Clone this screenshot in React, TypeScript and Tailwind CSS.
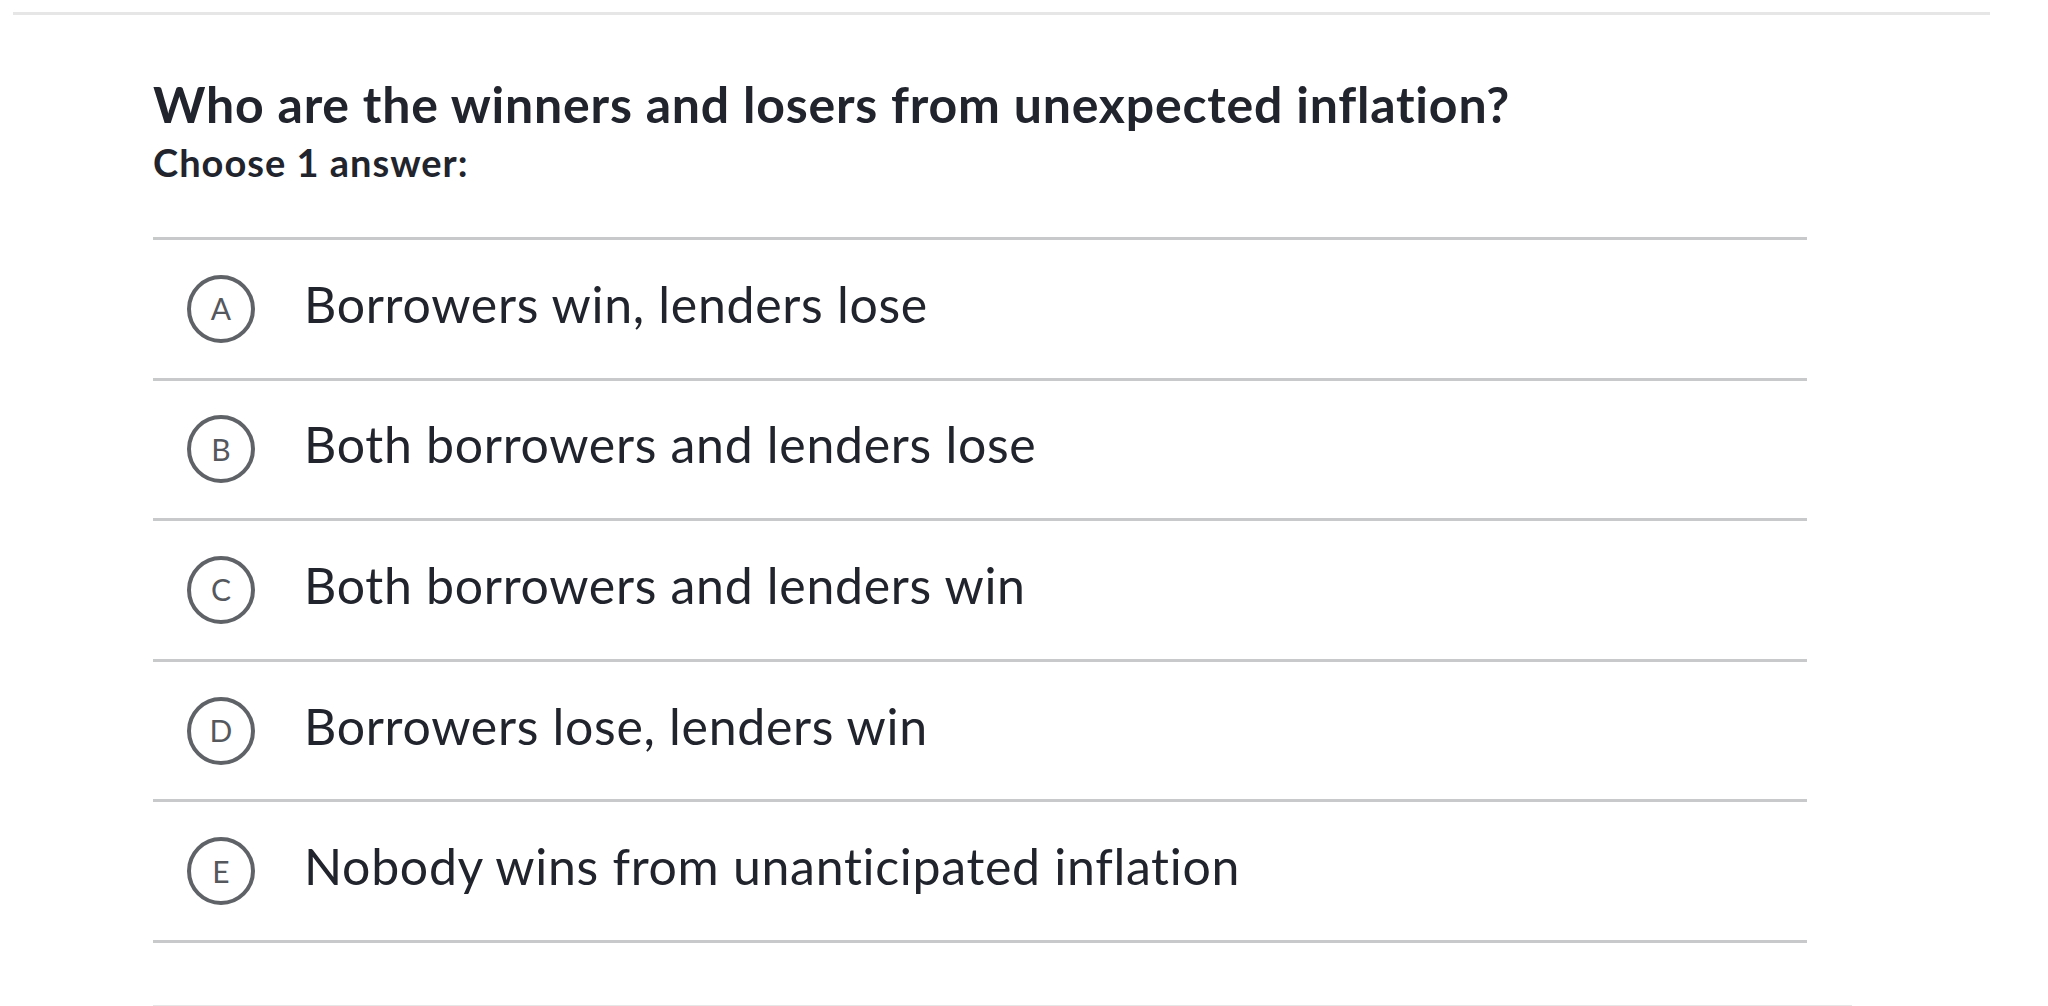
const choices = [
  { letter: 'A', text: 'Borrowers win, lenders lose' },
  { letter: 'B', text: 'Both borrowers and lenders lose' },
  { letter: 'C', text: 'Both borrowers and lenders win' },
  { letter: 'D', text: 'Borrowers lose, lenders win' },
  { letter: 'E', text: 'Nobody wins from unanticipated inflation' },
];

const App = () => {
  return (
    <div
      className="w-[2048px] h-[1006px] overflow-hidden bg-white text-[#21242c]"
      style={{ fontFamily: 'Lato, "Open Sans", sans-serif' }}
    >
      <div className="pt-[12px] pl-[13px]">
        <div className="w-[1977px] h-[3px] bg-[#e6e6e6]" />
      </div>
      <main className="pl-[153px]">
        <h1 className="mt-[59px] text-[50px] leading-[60px] font-bold tracking-[0.8px] whitespace-nowrap">
          Who are the winners and losers from unexpected inflation?
        </h1>
        <p className="mt-[5px] text-[38px] leading-[46px] font-bold tracking-[1px]">
          Choose 1 answer:
        </p>
        <ul className="mt-[52px] w-[1654px] border-b-[3px] border-[#c8c9cb]">
          {choices.map((c) => (
            <li
              key={c.letter}
              className="h-[140.6px] border-t-[3px] border-[#c8c9cb] flex items-center pl-[34px]"
            >
              <span className="w-[68px] h-[68px] shrink-0 rounded-full border-[4px] border-[#5f6266] flex items-center justify-center text-[30px] text-[#55585c]">
                {c.letter}
              </span>
              <span className="ml-[49px] mb-[10px] text-[50px] leading-[60px] tracking-[0.7px] whitespace-nowrap">
                {c.text}
              </span>
            </li>
          ))}
        </ul>
        <div className="mt-[62px] w-[1699px] h-[3px] bg-[#e6e6e6]" />
      </main>
    </div>
  );
};

export default App;
